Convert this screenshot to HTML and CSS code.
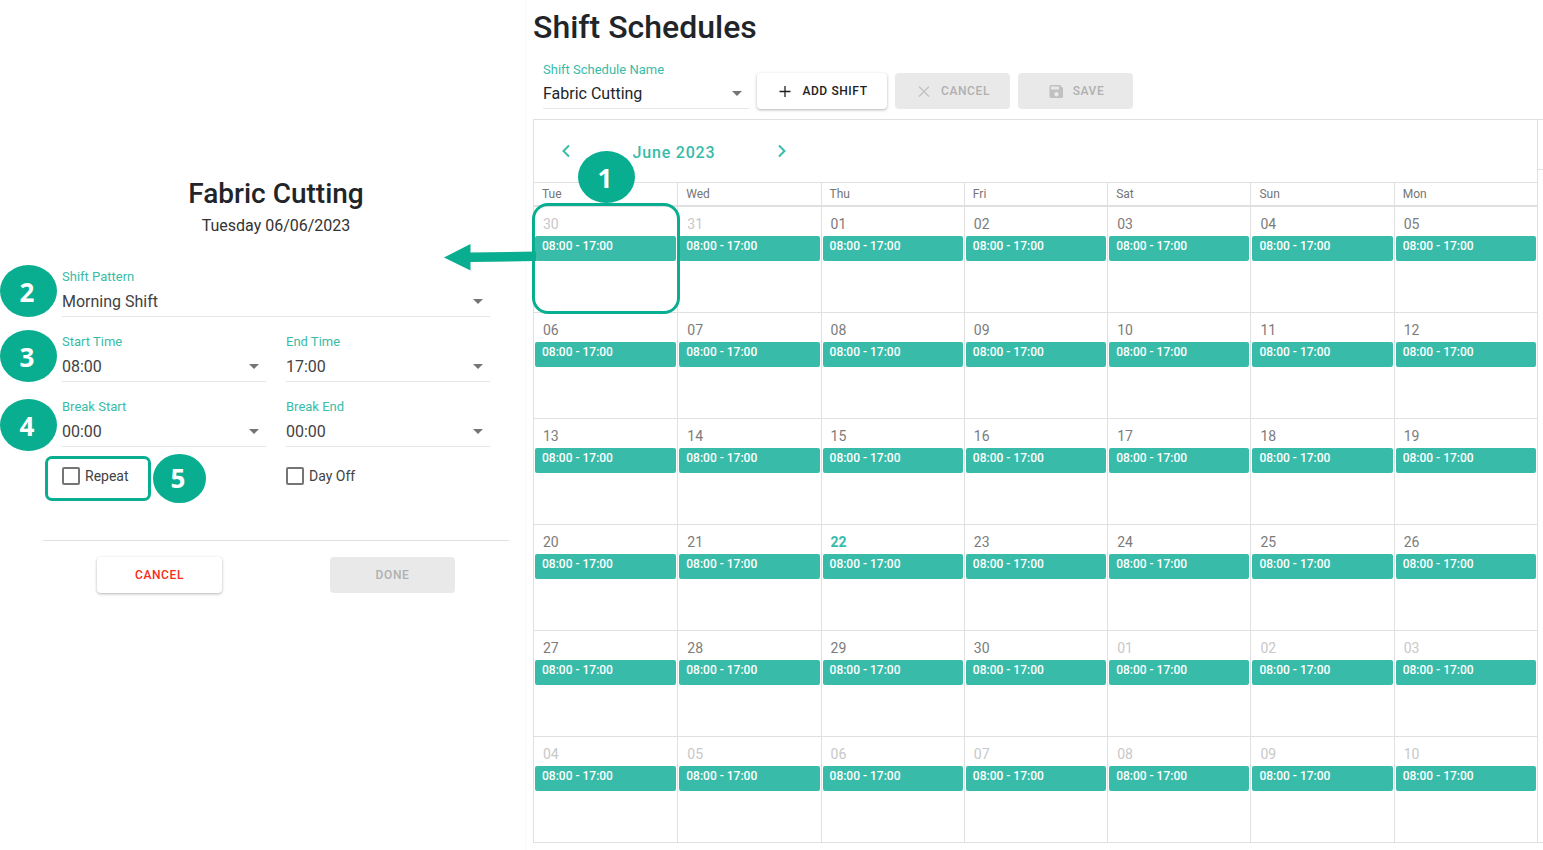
FILE: index.html
```html
<!DOCTYPE html>
<html lang="en">
<head>
    <meta charset="UTF-8">
    <meta name="viewport" content="width=device-width, initial-scale=1.0">
    <title>Shift Schedules</title>
    <link rel="stylesheet" href="styles.css">
</head>
<body>
    <div class="page">
        <!-- Shift editor -->
        <aside class="panel">
            <h2>Fabric Cutting</h2>
            <p class="panel-date">Tuesday 06/06/2023</p>
            <form class="shift-form">
                <div class="field wide">
                    <label for="pattern">Shift Pattern</label>
                    <select id="pattern"><option>Morning Shift</option></select>
                    <span class="badge badge-row">2</span>
                </div>
                <div class="field">
                    <label for="startTime">Start Time</label>
                    <select id="startTime"><option>08:00</option></select>
                    <span class="badge badge-row">3</span>
                </div>
                <div class="field">
                    <label for="endTime">End Time</label>
                    <select id="endTime"><option>17:00</option></select>
                </div>
                <div class="field">
                    <label for="breakStart">Break Start</label>
                    <select id="breakStart"><option>00:00</option></select>
                    <span class="badge badge-break">4</span>
                </div>
                <div class="field">
                    <label for="breakEnd">Break End</label>
                    <select id="breakEnd"><option>00:00</option></select>
                </div>
                <div class="check">
                    <input type="checkbox" id="repeat">
                    <label for="repeat">Repeat</label>
                    <span class="outline outline-check"></span>
                    <span class="badge badge-check">5</span>
                </div>
                <div class="check">
                    <input type="checkbox" id="dayOff">
                    <label for="dayOff">Day Off</label>
                </div>
            </form>
            <div class="panel-actions">
                <button type="button" class="btn danger">Cancel</button>
                <button type="button" class="btn" disabled>Done</button>
            </div>
        </aside>

        <!-- Calendar -->
        <main class="main">
            <h1>Shift Schedules</h1>
            <div class="toolbar">
                <div class="field">
                    <label for="schedule">Shift Schedule Name</label>
                    <select id="schedule"><option>Fabric Cutting</option></select>
                </div>
                <button type="button" class="btn add">
                    <svg width="18" height="18" viewBox="0 0 18 18"><path d="M9 4v11M3.500 9.500h11" stroke="currentColor" stroke-width="1.300" fill="none"/></svg>
                    Add Shift
                </button>
                <button type="button" class="btn" disabled>
                    <svg width="18" height="18" viewBox="0 0 18 18"><path d="M4 4.500l10 10M14 4.500l-10 10" stroke="currentColor" stroke-width="1.200" fill="none"/></svg>
                    Cancel
                </button>
                <button type="button" class="btn" disabled>
                    <svg width="18" height="18" viewBox="0 0 18 18"><path fill="currentColor" fill-rule="evenodd" d="M4 3h9l3 3v8.500a1.500 1.500 0 0 1-1.500 1.500h-10.500a1.500 1.500 0 0 1-1.500-1.500v-10a1.500 1.500 0 0 1 1.500-1.500zM4 4.500v3h8v-3zM9.500 10a2.200 2.200 0 1 0 .01 0z"/></svg>
                    Save
                </button>
            </div>

            <div class="schedule">
                <section class="calendar">
                    <div class="month-nav">
                        <button type="button" aria-label="Previous month"><svg width="20" height="20" viewBox="0 0 20 20"><path d="M13 4.500L7.500 10l5.500 5.500" stroke="currentColor" stroke-width="2" fill="none"/></svg></button>
                        <span class="month">June 2023</span>
                        <button type="button" aria-label="Next month"><svg width="20" height="20" viewBox="0 0 20 20"><path d="M7 4.500l5.500 5.500L7 15.500" stroke="currentColor" stroke-width="2" fill="none"/></svg></button>
                    </div>
                    <table>
                        <thead>
                            <tr><th>Tue</th><th>Wed</th><th>Thu</th><th>Fri</th><th>Sat</th><th>Sun</th><th>Mon</th></tr>
                        </thead>
                        <tbody>
                            <tr>
                                <td class="other selected">
                                    <span class="day">30</span><div class="event">08:00 - 17:00</div>
                                    <span class="outline outline-day"></span>
                                    <svg class="arrow" width="92" height="28" viewBox="0 0 92 28"><path fill="#08ae8f" d="M0 14.500L26.500 1v8.500L92 8.500v9.500l-65.500 1v8.500z"/></svg>
                                    <span class="badge badge-day">1</span>
                                </td>
                                <td class="other"><span class="day">31</span><div class="event">08:00 - 17:00</div></td>
                                <td><span class="day">01</span><div class="event">08:00 - 17:00</div></td>
                                <td><span class="day">02</span><div class="event">08:00 - 17:00</div></td>
                                <td><span class="day">03</span><div class="event">08:00 - 17:00</div></td>
                                <td><span class="day">04</span><div class="event">08:00 - 17:00</div></td>
                                <td><span class="day">05</span><div class="event">08:00 - 17:00</div></td>
                            </tr>
                            <tr>
                                <td><span class="day">06</span><div class="event">08:00 - 17:00</div></td>
                                <td><span class="day">07</span><div class="event">08:00 - 17:00</div></td>
                                <td><span class="day">08</span><div class="event">08:00 - 17:00</div></td>
                                <td><span class="day">09</span><div class="event">08:00 - 17:00</div></td>
                                <td><span class="day">10</span><div class="event">08:00 - 17:00</div></td>
                                <td><span class="day">11</span><div class="event">08:00 - 17:00</div></td>
                                <td><span class="day">12</span><div class="event">08:00 - 17:00</div></td>
                            </tr>
                            <tr>
                                <td><span class="day">13</span><div class="event">08:00 - 17:00</div></td>
                                <td><span class="day">14</span><div class="event">08:00 - 17:00</div></td>
                                <td><span class="day">15</span><div class="event">08:00 - 17:00</div></td>
                                <td><span class="day">16</span><div class="event">08:00 - 17:00</div></td>
                                <td><span class="day">17</span><div class="event">08:00 - 17:00</div></td>
                                <td><span class="day">18</span><div class="event">08:00 - 17:00</div></td>
                                <td><span class="day">19</span><div class="event">08:00 - 17:00</div></td>
                            </tr>
                            <tr>
                                <td><span class="day">20</span><div class="event">08:00 - 17:00</div></td>
                                <td><span class="day">21</span><div class="event">08:00 - 17:00</div></td>
                                <td class="today"><span class="day">22</span><div class="event">08:00 - 17:00</div></td>
                                <td><span class="day">23</span><div class="event">08:00 - 17:00</div></td>
                                <td><span class="day">24</span><div class="event">08:00 - 17:00</div></td>
                                <td><span class="day">25</span><div class="event">08:00 - 17:00</div></td>
                                <td><span class="day">26</span><div class="event">08:00 - 17:00</div></td>
                            </tr>
                            <tr>
                                <td><span class="day">27</span><div class="event">08:00 - 17:00</div></td>
                                <td><span class="day">28</span><div class="event">08:00 - 17:00</div></td>
                                <td><span class="day">29</span><div class="event">08:00 - 17:00</div></td>
                                <td><span class="day">30</span><div class="event">08:00 - 17:00</div></td>
                                <td class="other"><span class="day">01</span><div class="event">08:00 - 17:00</div></td>
                                <td class="other"><span class="day">02</span><div class="event">08:00 - 17:00</div></td>
                                <td class="other"><span class="day">03</span><div class="event">08:00 - 17:00</div></td>
                            </tr>
                            <tr>
                                <td class="other"><span class="day">04</span><div class="event">08:00 - 17:00</div></td>
                                <td class="other"><span class="day">05</span><div class="event">08:00 - 17:00</div></td>
                                <td class="other"><span class="day">06</span><div class="event">08:00 - 17:00</div></td>
                                <td class="other"><span class="day">07</span><div class="event">08:00 - 17:00</div></td>
                                <td class="other"><span class="day">08</span><div class="event">08:00 - 17:00</div></td>
                                <td class="other"><span class="day">09</span><div class="event">08:00 - 17:00</div></td>
                                <td class="other"><span class="day">10</span><div class="event">08:00 - 17:00</div></td>
                            </tr>
                        </tbody>
                    </table>
                </section>
                <div class="side"><div class="side-head"></div></div>
            </div>
        </main>
    </div>
</body>
</html>
```
FILE: styles.css
```css
* {
    box-sizing: border-box;
}
body {
    margin: 0;
    font-family: Roboto, Arial, sans-serif;
    font-weight: 400;
    color: #212529;
    background-color: #fff;
}
h1, h2, p {
    margin: 0;
}
.page {
    display: flex;
    min-height: 100vh;
}

/* Left panel */
.panel {
    flex: 0 0 525px;
    padding: 176px 16px 0 43px;
}
h2 {
    font-size: 28px;
    font-weight: 500;
    line-height: 36px;
    text-align: center;
}
.panel-date {
    margin-top: 2px;
    font-size: 16px;
    line-height: 24px;
    text-align: center;
    color: #333;
}
.shift-form {
    display: grid;
    grid-template-columns: 1fr 1fr;
    gap: 16px 20px;
    margin: 30px 19px 51px;
}
.wide {
    grid-column: span 2;
}
.field {
    position: relative;
}
.field label {
    display: block;
    font-size: 13px;
    line-height: 17px;
    color: #38bca9;
}
.field select {
    display: block;
    width: 100%;
    height: 32px;
    padding: 2px 0 0;
    border: none;
    border-bottom: 1px solid #e6e6ea;
    border-radius: 0;
    background: none;
    appearance: none;
    font-family: inherit;
    font-size: 16px;
    color: #424242;
}
.field::after {
    content: "";
    position: absolute;
    right: 7px;
    bottom: 13px;
    border: 5px solid transparent;
    border-top-color: #757575;
    border-bottom: none;
    pointer-events: none;
}
.check {
    position: relative;
    display: flex;
    align-items: center;
    gap: 5px;
    height: 26px;
    font-size: 14px;
    color: #424242;
}
.check input {
    width: 18px;
    height: 18px;
    margin: 0;
    border: 2px solid #757575;
    border-radius: 2px;
    background-color: #fff;
    appearance: none;
}
.check input:checked {
    background-color: #38bca9;
}
.panel-actions {
    display: flex;
    justify-content: space-around;
    padding-top: 16px;
    border-top: 1px solid #e0e0e0;
}

/* Buttons */
.btn {
    display: flex;
    align-items: center;
    justify-content: center;
    gap: 8px;
    width: 115px;
    height: 36px;
    padding: 0;
    border: none;
    border-radius: 4px;
    background-color: #fff;
    box-shadow: 0 1px 3px rgba(0, 0, 0, 0.3);
    font-family: inherit;
    font-size: 12px;
    font-weight: 500;
    letter-spacing: 0.05em;
    text-transform: uppercase;
    color: #212121;
    cursor: pointer;
}
.btn:disabled {
    background-color: #e9e9e9;
    box-shadow: none;
    color: #b0b0b0;
    cursor: default;
}
.btn:disabled svg {
    color: #c0c0c0;
}
.panel-actions .btn {
    width: 125px;
}
.btn.add {
    width: 130px;
}
.btn.danger {
    color: #f52c20;
}

/* Right side */
.main {
    flex: 1;
    min-width: 0;
    padding: 7px 0 7px 7px;
    border-left: 1px solid #f9f9f9;
}
h1 {
    font-size: 32px;
    font-weight: 500;
    line-height: 40px;
}
.toolbar {
    display: flex;
    align-items: flex-end;
    gap: 8px;
    padding: 14px 0 10px 10px;
}
.toolbar .field {
    width: 206px;
}
.toolbar select {
    height: 31px;
    padding: 0;
    color: #212529;
}
.schedule {
    display: flex;
}
.calendar {
    flex: 1;
    min-width: 0;
    border-top: 1px solid #e0e0e0;
    border-left: 1px solid #e0e0e0;
}
.side {
    flex: 0 0 6px;
    border: 1px solid #e0e0e0;
    border-right: none;
}
.side-head {
    height: 50px;
    border-bottom: 1px solid #e0e0e0;
}
.month-nav {
    display: flex;
    align-items: center;
    justify-content: space-between;
    width: 236px;
    height: 62px;
    margin-left: 22px;
    color: #38bca9;
}
.month-nav button {
    display: flex;
    padding: 0;
    border: none;
    background: none;
    color: inherit;
    cursor: pointer;
}
.month {
    padding-top: 2px;
    font-size: 16px;
    font-weight: 500;
    letter-spacing: 0.05em;
}
table {
    width: 100%;
    border-spacing: 0;
    table-layout: fixed;
    border-top: 1px solid #e0e0e0;
}
th {
    height: 24px;
    padding: 0 8px;
    border-left: 1px solid #e0e0e0;
    border-bottom: 2px solid #e0e0e0;
    font-size: 12px;
    font-weight: 400;
    text-align: left;
    color: #757575;
}
td {
    height: 106px;
    padding: 5px 1px 0;
    border-left: 1px solid #e0e0e0;
    border-bottom: 1px solid #e0e0e0;
    vertical-align: top;
}
th:first-child, td:first-child {
    border-left: none;
}
.day {
    display: block;
    padding: 0 8px;
    font-size: 14px;
    line-height: 24px;
    color: #7c7c7c;
}
.other .day {
    color: #c8c8c8;
}
.today .day {
    font-weight: 700;
    color: #38bca9;
}
.event {
    height: 25px;
    padding: 0 7px;
    border-radius: 2px;
    background-color: #38bca9;
    font-size: 12px;
    font-weight: 500;
    line-height: 20px;
    color: #fff;
}
.selected {
    position: relative;
}

/* Numbered callouts */
.badge {
    position: absolute;
    z-index: 2;
    width: 57px;
    height: 52px;
    padding-right: 3px;
    border-radius: 50%;
    background-color: #08ae8f;
    font-family: "Open Sans", sans-serif;
    font-size: 26px;
    font-weight: 700;
    line-height: 55px;
    text-align: center;
    color: #fff;
}
.badge-row {
    left: -62px;
    top: -3px;
}
.badge-break {
    left: -62px;
    top: 1px;
}
.badge-check {
    left: 91px;
    top: -9px;
    width: 53px;
    height: 49px;
    line-height: 49px;
}
.badge-day {
    left: 44px;
    top: -56px;
}
.outline {
    position: absolute;
    border: 3px solid #08ae8f;
    pointer-events: none;
}
.outline-check {
    left: -17px;
    top: -7px;
    width: 106px;
    height: 45px;
    border-radius: 7px;
}
.outline-day {
    inset: -4px -3px -2px -2px;
    border-radius: 16px;
}
.arrow {
    position: absolute;
    left: -90px;
    top: 36px;
}
```
